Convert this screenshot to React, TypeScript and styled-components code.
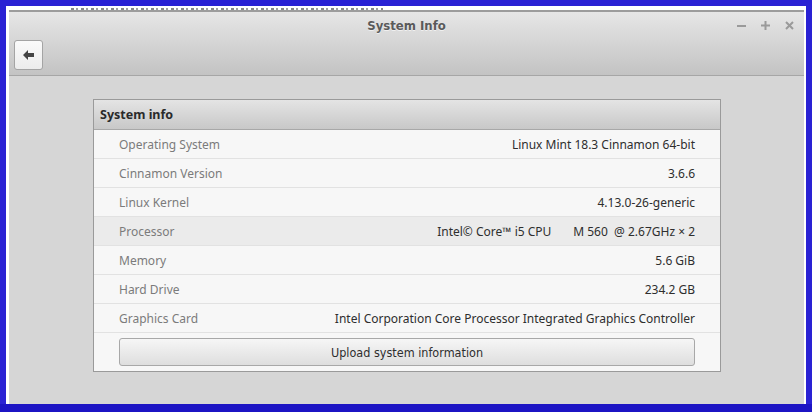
import React from 'react';
import styled, { createGlobalStyle } from 'styled-components';

const GlobalStyle = createGlobalStyle`
  html, body {
    margin: 0;
    padding: 0;
    background: #2a22d4;
  }
`;

/* 시스템 정보 데이터 */
const rows: { label: string; value: string; active?: boolean }[] = [
  { label: 'Operating System', value: 'Linux Mint 18.3 Cinnamon 64-bit' },
  { label: 'Cinnamon Version', value: '3.6.6' },
  { label: 'Linux Kernel', value: '4.13.0-26-generic' },
  { label: 'Processor', value: 'Intel© Core™ i5 CPU       M 560  @ 2.67GHz × 2', active: true },
  { label: 'Memory', value: '5.6 GiB' },
  { label: 'Hard Drive', value: '234.2 GB' },
  { label: 'Graphics Card', value: 'Intel Corporation Core Processor Integrated Graphics Controller' },
];

const App = () => (
  <>
    <GlobalStyle />
    <Desktop>
      <Screen>
        <BehindStrip />
        <Window>
          <HeaderBar>
            <TitleRow>
              <Title>System Info</Title>
              <Controls>
                <ControlButton>
                  <svg width="9" height="9" viewBox="0 0 9 9">
                    <rect x="0" y="4" width="9" height="2" fill="#9a9a9a" />
                  </svg>
                </ControlButton>
                <ControlButton>
                  <svg width="9" height="9" viewBox="0 0 9 9">
                    <rect x="0" y="3.5" width="9" height="2" fill="#9a9a9a" />
                    <rect x="3.5" y="0" width="2" height="9" fill="#9a9a9a" />
                  </svg>
                </ControlButton>
                <ControlButton>
                  <svg width="9" height="9" viewBox="0 0 9 9">
                    <path d="M1 1 L8 8 M8 1 L1 8" stroke="#9a9a9a" strokeWidth="2" />
                  </svg>
                </ControlButton>
              </Controls>
            </TitleRow>
            <ToolRow>
              <BackButton>
                <svg width="12" height="10" viewBox="0 0 12 10">
                  <path d="M0 5 L5 0 L5 3 L11 3 L11 7 L5 7 L5 10 Z" fill="#444" />
                </svg>
              </BackButton>
            </ToolRow>
          </HeaderBar>
          <Content>
            <Panel>
              <PanelHeader>System info</PanelHeader>
              {rows.map((r) => (
                <Row key={r.label} active={r.active}>
                  <Label>{r.label}</Label>
                  <Value>{r.value}</Value>
                </Row>
              ))}
              <ButtonArea>
                <UploadButton>Upload system information</UploadButton>
              </ButtonArea>
            </Panel>
          </Content>
        </Window>
      </Screen>
    </Desktop>
  </>
);

export default App;

/* Desktop 컴포넌트 */
const Desktop = styled.div`
  width: 812px;
  height: 412px;
  box-sizing: border-box;
  padding: 6px 6px 0 6px;
  background: #2a22d4;
  border-bottom: 8px solid #1c14c4;
  overflow: hidden;
`;

/* Screen 컴포넌트 */
const Screen = styled.div`
  position: relative;
  height: 398px;
  box-sizing: border-box;
  border-top: 4px solid #ffffff;
  border-left: 3px solid #ffffff;
  border-right: 2px solid #ffffff;
  display: flex;
  flex-direction: column;
`;

/* BehindStrip 컴포넌트 - 뒤 창의 잘린 글자 흔적 */
const BehindStrip = styled.div`
  position: absolute;
  top: -2px;
  left: 62px;
  width: 312px;
  height: 2px;
  background: repeating-linear-gradient(
    90deg,
    #555 0 3px,
    transparent 3px 5px,
    #777 5px 7px,
    transparent 7px 10px
  );
  opacity: 0.7;
`;

/* Window 컴포넌트 */
const Window = styled.div`
  flex: 1;
  display: flex;
  flex-direction: column;
  background: #d6d6d6;
  font-family: 'Noto Sans', sans-serif;
`;

/* HeaderBar 컴포넌트 */
const HeaderBar = styled.div`
  height: 66px;
  box-sizing: border-box;
  border-top: 2px solid #9c9c9c;
  border-bottom: 1px solid #a6a6a6;
  background: linear-gradient(#e6e6e6, #c3c3c3);
  display: flex;
  flex-direction: column;
`;

const TitleRow = styled.div`
  height: 26px;
  position: relative;
  display: flex;
  align-items: center;
  justify-content: center;
`;

const Title = styled.span`
  font-family: 'DejaVu Sans Condensed', 'DejaVu Sans', sans-serif;
  font-size: 13px;
  font-weight: bold;
  color: #5a5a5a;
  text-shadow: 0 1px 0 rgba(255, 255, 255, 0.6);
`;

const Controls = styled.div`
  position: absolute;
  right: 10px;
  top: 8px;
  display: flex;
  gap: 14px;
`;

const ControlButton = styled.span`
  display: flex;
  width: 10px;
  height: 10px;
  align-items: center;
  justify-content: center;
`;

const ToolRow = styled.div`
  flex: 1;
  display: flex;
  align-items: flex-start;
  padding: 2px 0 0 5px;
`;

const BackButton = styled.div`
  width: 29px;
  height: 30px;
  box-sizing: border-box;
  border: 1px solid #a4a4a4;
  border-radius: 3px;
  background: linear-gradient(#fafafa, #ececec);
  display: flex;
  align-items: center;
  justify-content: center;
`;

/* Content 컴포넌트 */
const Content = styled.div`
  flex: 1;
  padding: 23px 0 0 84px;
`;

/* Panel 컴포넌트 */
const Panel = styled.div`
  width: 628px;
  box-sizing: border-box;
  border: 1px solid #9a9a9a;
  background: #f7f7f7;
`;

const PanelHeader = styled.div`
  height: 30px;
  box-sizing: border-box;
  border-bottom: 1px solid #a8a8a8;
  background: linear-gradient(#e4e4e4, #c8c8c8);
  padding-left: 6px;
  display: flex;
  align-items: center;
  font-size: 12.5px;
  font-weight: bold;
  color: #2a2a2a;
`;

const Row = styled.div<{ active?: boolean }>`
  height: 29px;
  box-sizing: border-box;
  border-bottom: 1px solid #e2e2e2;
  background: ${(p) => (p.active ? '#ebebeb' : '#f7f7f7')};
  display: flex;
  align-items: center;
  justify-content: space-between;
  padding: 0 25px 0 25px;
  font-size: 12px;
`;

const Label = styled.span`
  color: #7b7b7b;
`;

const Value = styled.span`
  color: #2e2e2e;
  white-space: pre;
`;

const ButtonArea = styled.div`
  padding: 5px 25px 5px 25px;
`;

const UploadButton = styled.div`
  height: 28px;
  box-sizing: border-box;
  border: 1px solid #a8a8a8;
  border-radius: 3px;
  background: linear-gradient(#f6f6f6, #dedede);
  display: flex;
  align-items: center;
  justify-content: center;
  font-family: 'DejaVu Sans Condensed', 'DejaVu Sans', sans-serif;
  font-size: 12.5px;
  color: #2e2e2e;
`;
